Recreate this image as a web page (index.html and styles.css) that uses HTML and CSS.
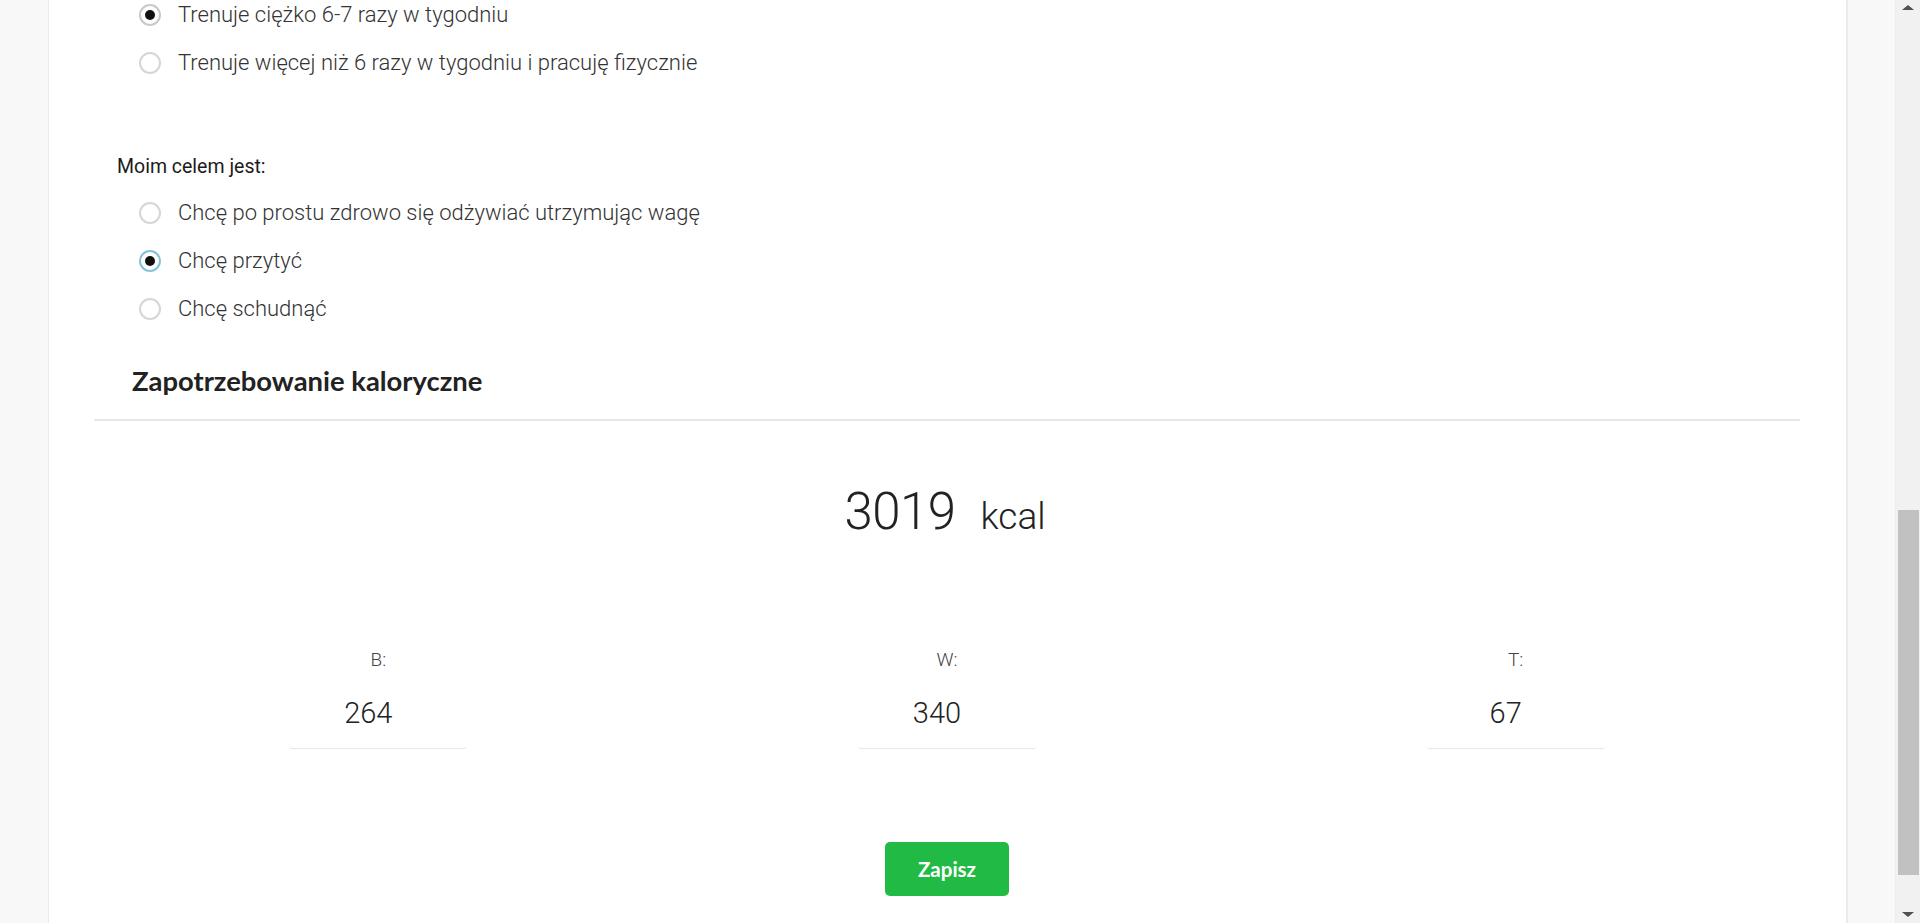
FILE: index.html
```html
<!DOCTYPE html>
<html lang="pl">
<head>
<meta charset="utf-8">
<title>Zapotrzebowanie kaloryczne</title>
<link rel="stylesheet" href="styles.css">
</head>
<body>
<div class="page">
  <main class="card">
    <section class="form">
      <div class="options options-top">
        <label class="option"><span class="radio checked"></span><span class="option-text">Trenuje ciężko 6-7 razy w tygodniu</span></label>
        <label class="option"><span class="radio"></span><span class="option-text">Trenuje więcej niż 6 razy w tygodniu i pracuję fizycznie</span></label>
      </div>
      <div class="field-label">Moim celem jest:</div>
      <div class="options">
        <label class="option"><span class="radio"></span><span class="option-text">Chcę po prostu zdrowo się odżywiać utrzymując wagę</span></label>
        <label class="option"><span class="radio checked focused"></span><span class="option-text">Chcę przytyć</span></label>
        <label class="option"><span class="radio"></span><span class="option-text">Chcę schudnąć</span></label>
      </div>
    </section>

    <h2 class="section-title">Zapotrzebowanie kaloryczne</h2>

    <div class="calories">
      <span class="cal-value">3019</span>
      <span class="cal-unit">kcal</span>
    </div>

    <div class="macros">
      <div class="macro">
        <div class="macro-label">B:</div>
        <div class="macro-box">264</div>
      </div>
      <div class="macro">
        <div class="macro-label">W:</div>
        <div class="macro-box">340</div>
      </div>
      <div class="macro">
        <div class="macro-label">T:</div>
        <div class="macro-box">67</div>
      </div>
    </div>

    <div class="actions">
      <button class="btn-save" type="button">Zapisz</button>
    </div>
  </main>
</div>

<div class="scrollbar" aria-hidden="true">
  <span class="sb-arrow sb-up"></span>
  <span class="sb-thumb"></span>
  <span class="sb-arrow sb-down"></span>
</div>
</body>
</html>
```

FILE: styles.css
```css
* { box-sizing: border-box; }

html, body {
  margin: 0;
  padding: 0;
  height: 100%;
  overflow: hidden;
}

body {
  background: #f8f8f8;
  font-family: Roboto, "Liberation Sans", sans-serif;
  color: #333;
}

.page {
  padding: 0 72px 0 48px;
  height: 100%;
}

.card {
  background: #fff;
  border-left: 1px solid #ebebeb;
  border-right: 2px solid #ebebeb;
  min-height: 100%;
  padding: 0 46px 0 45px;
}

/* form */
.form {
  padding-left: 23px;
}

.options {
  display: flex;
  flex-direction: column;
  gap: 18px;
  padding-left: 22px;
}

.option {
  display: flex;
  align-items: center;
  height: 30px;
  gap: 17px;
  cursor: pointer;
}

.radio {
  position: relative;
  width: 22px;
  height: 22px;
  flex: 0 0 22px;
  border: 2px solid #d6d6d6;
  border-radius: 50%;
  background: #fff;
}

.radio.checked {
  border-color: #c9c9c9;
}

.radio.checked::after {
  content: "";
  position: absolute;
  left: 4px;
  top: 4px;
  width: 10px;
  height: 10px;
  border-radius: 50%;
  background: #111;
}

.radio.focused {
  border-color: #84c2da;
}

.option-text {
  font-size: 22px;
  font-weight: 300;
  color: #333;
  line-height: 30px;
}

.field-label {
  margin-top: 77px;
  margin-bottom: 19px;
  font-size: 19.5px;
  line-height: 24px;
  font-weight: 400;
  color: #1b1b1b;
}

/* section title */
.section-title {
  margin: 40px 0 0;
  padding: 0 0 21px 38px;
  font-family: Lato, "Liberation Sans", sans-serif;
  font-weight: 700;
  font-size: 27.4px;
  line-height: 34px;
  color: #222;
  border-bottom: 2px solid #e8e8e8;
}

/* calories */
.calories {
  margin-top: 61px;
  display: flex;
  justify-content: center;
  align-items: baseline;
  gap: 25px;
  line-height: 60px;
  color: #222;
  padding-right: 4px;
}

.cal-value {
  font-size: 51px;
  font-weight: 300;
  letter-spacing: -0.5px;
}

.cal-unit {
  font-size: 37px;
  font-weight: 300;
}

/* macros */
.macros {
  margin-top: 101px;
  display: grid;
  grid-template-columns: repeat(3, 1fr);
}

.macro {
  display: flex;
  flex-direction: column;
  align-items: center;
  gap: 6px;
}

.macro-label {
  font-size: 19px;
  line-height: 24px;
  font-weight: 300;
  color: #444;
}

.macro-box {
  width: 180px;
  height: 70px;
  display: flex;
  align-items: center;
  justify-content: center;
  padding-right: 20px;
  font-size: 29px;
  font-weight: 300;
  color: #222;
  background: #fff;
  border-radius: 4px;
  box-shadow: 0 2px 1px -1px rgba(0, 0, 0, 0.1);
}

/* actions */
.actions {
  margin-top: 94px;
  display: flex;
  justify-content: center;
}

.btn-save {
  width: 124px;
  height: 54px;
  border: none;
  border-radius: 5px;
  background: #21ba45;
  color: #fff;
  font-family: Lato, "Liberation Sans", sans-serif;
  font-weight: 700;
  font-size: 20.5px;
  cursor: pointer;
}

/* scrollbar overlay */
.scrollbar {
  position: fixed;
  top: 0;
  right: 0;
  width: 25px;
  height: 100%;
  background: #f1f1f1;
  border-left: 1px solid #ececec;
}

.sb-thumb {
  position: absolute;
  left: 2px;
  right: 1px;
  top: 510px;
  height: 365px;
  background: #c1c1c1;
}

.sb-arrow {
  position: absolute;
  left: 6px;
  width: 0;
  height: 0;
  border-left: 6px solid transparent;
  border-right: 6px solid transparent;
}

.sb-up {
  top: 5px;
  border-bottom: 5px solid #505050;
}

.sb-down {
  bottom: 6px;
  border-top: 5px solid #505050;
}
```
